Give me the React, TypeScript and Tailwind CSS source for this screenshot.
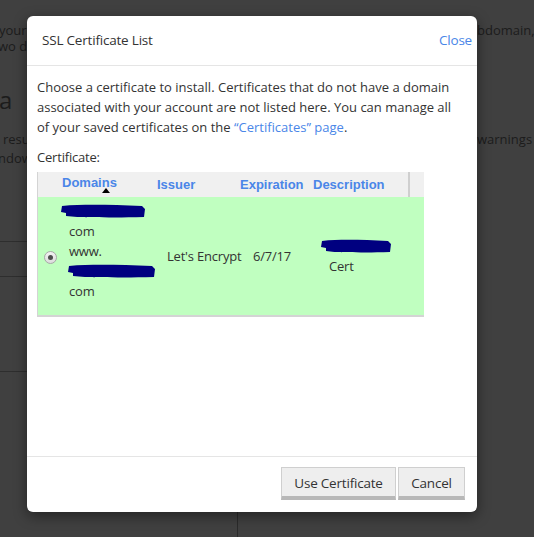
import { useState } from "react";

const SEGOE = "font-['Open_Sans','Noto_Sans',sans-serif]";

type Cert = {
  domains: Array<{ text?: string; masked?: number }>;
  issuer: string;
  expires: string;
  description: string;
};

const certs: Cert[] = [
  {
    domains: [{ masked: 86 }, { text: "com" }, { text: "www." }, { masked: 89 }, { text: "com" }],
    issuer: "Let's Encrypt",
    expires: "6/7/17",
    description: "Cert",
  },
];

// hand-drawn marker strokes used to hide domain names
function Scribble({ width, className = "" }: { width: number; className?: string }) {
  return (
    <svg width={width} height={16} viewBox={`0 0 ${width} 16`} className={`block ${className}`}>
      <path
        d={`M2 3 C ${width * 0.3} 1, ${width * 0.6} 2, ${width - 4} 3 L ${width - 1} 6 L ${width - 2} 14 C ${width * 0.6} 15, ${width * 0.35} 14, ${width * 0.2} 14 L 6 13 L 6 10 L 1 9 Z`}
        fill="#000080"
      />
    </svg>
  );
}

function BackgroundPage() {
  return (
    <div className="flex flex-col text-[13px] leading-[16px] text-[#1c1c1c]">
      <div className="mt-[22px] flex justify-between">
        <span className="-ml-[1px]">your</span>
        <span className="w-[57px] overflow-hidden whitespace-nowrap">bdomain,</span>
      </div>
      <div className="-ml-[2px]">wo do</div>
      <div className="mt-[32px] -ml-[1px] text-[24px] leading-[28px]">a</div>
      <div className="mt-[17px] flex justify-between">
        <span className="ml-[3px]">resu</span>
        <span className="w-[57px] overflow-hidden whitespace-nowrap">warnings</span>
      </div>
      <div className="mt-[3px] -ml-[2px]">ndow</div>
      <div className="flex">
        <div className="flex w-[238px] flex-col">
          <div className="h-[76px] border-b border-[#2e2e2e]" />
          <div className="h-[35px] border-b border-[#2e2e2e]" />
          <div className="h-[95px] border-b border-[#2e2e2e]" />
          <div className="h-[170px] border-r border-[#2b2b2b]" />
        </div>
      </div>
    </div>
  );
}

function Radio({ checked }: { checked: boolean }) {
  return (
    <span className="flex h-[13px] w-[13px] items-center justify-center rounded-full border border-[#a8a8a8] bg-gradient-to-b from-[#f2f2f2] to-[#dcdcdc]">
      {checked && <span className="h-[5px] w-[5px] rounded-full bg-[#4d4d4d]" />}
    </span>
  );
}

function CertificateTable() {
  const [selected, setSelected] = useState(0);
  const head = "font-['Liberation_Sans',Arial,sans-serif] text-[13px] font-bold text-[#4a86e8] tracking-normal";

  return (
    <div className="w-[387px] border-b-2 border-l border-[#d4d4d4]">
      <div className={`flex h-[25px] items-center bg-[#f0f0f0] ${head}`}>
        <div className="w-[24px]" />
        <div className="relative w-[95px] -translate-y-[2px]">
          Domains
          <span className="absolute left-[40px] top-[15px] h-0 w-0 border-x-[4px] border-b-[5px] border-x-transparent border-b-black" />
        </div>
        <div className="w-[83px]">Issuer</div>
        <div className="w-[73px]">Expiration</div>
        <div className="w-[95px]">Description</div>
        <div className="h-full w-[2px] bg-[#cfcfcf]" />
      </div>

      {certs.map((c, i) => (
        <div
          key={i}
          onClick={() => setSelected(i)}
          className="flex items-center bg-[#c0ffc0] text-[13px] leading-[20px] text-[#333]"
        >
          <div className="flex w-[24px] justify-center pl-[1px] pt-[3px]">
            <Radio checked={selected === i} />
          </div>
          <div className="flex w-[95px] flex-col pb-[14px] pt-[4px]">
            {c.domains.map((d, j) =>
              d.masked ? (
                <div key={j} className={`flex h-[20px] items-center ${j === 0 ? "-ml-[2px]" : "ml-[5px]"}`}>
                  <Scribble width={d.masked} />
                </div>
              ) : (
                <div key={j} className="ml-[7px]">
                  {d.text}
                </div>
              ),
            )}
          </div>
          <div className="w-[86px] whitespace-nowrap pl-[10px]">{c.issuer}</div>
          <div className="w-[70px] pl-[10px]">{c.expires}</div>
          <div className="flex w-[110px] flex-col">
            <div className="ml-[7px] flex h-[20px] items-center">
              <Scribble width={72} />
            </div>
            <div className="ml-[16px]">{c.description}</div>
          </div>
        </div>
      ))}
    </div>
  );
}

function CertificateDialog() {
  return (
    <div
      className={`absolute left-[27px] top-[16px] flex h-[496px] w-[450px] flex-col rounded-[6px] bg-white text-[#333] tracking-[-0.2px] shadow-[0_4px_14px_rgba(0,0,0,0.45)] ${SEGOE}`}
    >
      <div className="flex h-[50px] items-center justify-between border-b border-[#e5e5e5] pl-[15px] pr-[5px]">
        <h1 className="text-[13.5px]">SSL Certificate List</h1>
        <a href="#" className="text-[13.5px] text-[#4a86e8]">
          Close
        </a>
      </div>

      <div className="flex-1 px-[10px] pt-[11px] text-[13px] leading-[20px]">
        <p className="w-[421px] tracking-normal">
          Choose a certificate to install. Certificates that do not have a domain associated with
          your account are not listed here. You can manage all of your saved certificates on the{" "}
          <a href="#" className="text-[#4a86e8]">
            “Certificates” page
          </a>
          .
        </p>
        <p className="mb-[5px] mt-[10px]">Certificate:</p>
        <CertificateTable />
      </div>

      <div className="flex justify-end gap-[2px] border-t border-[#e5e5e5] pb-[12px] pl-[12px] pr-[12px] pt-[10px]">
        <button className="h-[33px] w-[115px] border border-b-[4px] border-[#cfcfcf] border-b-[#b8b8b8] bg-[#eeeeee] pt-[3px] text-[13.5px] text-[#333]">
          Use Certificate
        </button>
        <button className="h-[33px] w-[67px] border border-b-[4px] border-[#cfcfcf] border-b-[#b8b8b8] bg-[#eeeeee] pt-[3px] text-[13.5px] text-[#333]">
          Cancel
        </button>
      </div>
    </div>
  );
}

export default function App() {
  return (
    <div className={`relative h-[537px] w-[534px] overflow-hidden bg-[#404040] ${SEGOE}`}>
      <BackgroundPage />
      <CertificateDialog />
    </div>
  );
}
